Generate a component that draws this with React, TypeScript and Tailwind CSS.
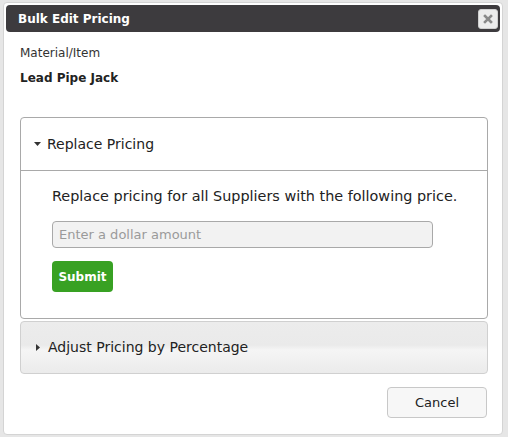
import React from "react";

export default function App() {
  const font = { fontFamily: '"DejaVu Sans", Verdana, sans-serif' };
  return (
    <div className="w-[508px] h-[437px] bg-[#e6e6e6] pt-[2px] pl-[3px]" style={font}>
      <div className="w-[500px] h-[433px] bg-white rounded-[4px] border border-[#d4d4d4] p-[1px] flex flex-col">
        <div className="h-[27px] shrink-0 bg-[#3d3b3e] rounded-[4px] flex items-center justify-between pl-[12px] pr-[2px] mx-[1px] mt-[1px]">
          <span className="text-white font-bold text-[12px] leading-[16px]">Bulk Edit Pricing</span>
          <div className="w-[20px] h-[20px] bg-[#ececec] rounded-[3px] border border-[#cfcfcf] flex items-center justify-center">
            <svg width="10" height="10" viewBox="0 0 10 10">
              <path d="M2 2 L8 8 M8 2 L2 8" stroke="#8a8a8a" strokeWidth="2.6" strokeLinecap="square" />
            </svg>
          </div>
        </div>
        <div className="pl-[15px] pr-[13px]">
          <div className="mt-[13px] text-[12px] text-[#333] leading-[16px]">Material/Item</div>
          <div className="mt-[9px] text-[12px] font-bold text-[#222] leading-[16px]">Lead Pipe Jack</div>
          <div className="mt-[31px] border border-[#a9a9a9] rounded-[4px]">
            <div className="h-[53px] flex items-center pl-[13px] border-b border-[#a9a9a9] text-[14px] text-[#222]">
              <svg width="8" height="6" viewBox="0 0 8 6" className="mr-[5px] mt-[1px]">
                <path d="M0 0 H7 L3.5 4 Z" fill="#333" />
              </svg>
              Replace Pricing
            </div>
            <div className="pl-[31px] pt-[16px] pb-[26px]">
              <div className="text-[14.4px] text-[#222] leading-[18px] whitespace-nowrap">
                Replace pricing for all Suppliers with the following price.
              </div>
              <input
                className="mt-[16px] block w-[381px] h-[27px] bg-[#f2f2f2] border border-[#a9a9a9] rounded-[4px] px-[6px] text-[13px] placeholder:text-[#9a9a9a] outline-none"
                placeholder="Enter a dollar amount"
                style={font}
              />
              <button
                className="mt-[13px] block w-[61px] h-[31px] bg-[#38a123] rounded-[4px] text-white text-[12px] font-bold"
                style={font}
              >
                Submit
              </button>
            </div>
          </div>
          <div className="mt-[2px] h-[53px] border border-[#d0d0d0] rounded-[4px] bg-[linear-gradient(#ececec_0%,#eaeaea_45%,#f5f5f5_55%,#ebebeb_100%)] flex items-center pl-[15px] text-[14px] text-[#222]">
            <svg width="6" height="8" viewBox="0 0 6 8" className="mr-[6px]">
              <path d="M0 0 V7 L4 3.5 Z" fill="#333" />
            </svg>
            Adjust Pricing by Percentage
          </div>
          <div className="flex justify-end mt-[13px] pr-[1px]">
            <button
              className="w-[100px] h-[31px] bg-[#f7f7f7] border border-[#c8c8c8] rounded-[4px] text-[13px] text-[#222]"
              style={font}
            >
              Cancel
            </button>
          </div>
        </div>
      </div>
    </div>
  );
}
